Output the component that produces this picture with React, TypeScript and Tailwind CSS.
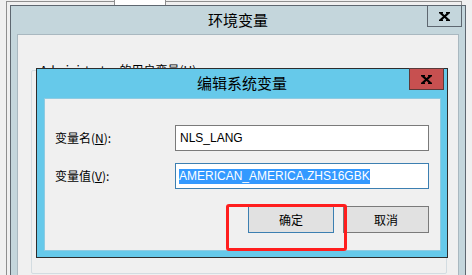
import React from "react";

const XGlyph = () => (
  <svg width="11" height="9" viewBox="0 0 11 9" className="block">
    <path d="M1.5 1 L9.5 8 M9.5 1 L1.5 8" stroke="#000" strokeWidth="2.3" />
    <path d="M0 0.8 H4 M7 0.8 H11 M0 8.2 H4 M7 8.2 H11" stroke="#000" strokeWidth="1.4" />
  </svg>
);

export default function App() {
  const cjk = { fontFamily: '"Noto Sans CJK SC", "Liberation Sans", sans-serif' };
  const latin = { fontFamily: '"Liberation Sans", "Noto Sans CJK SC", sans-serif' };
  return (
    <div className="relative w-[472px] h-[275px] overflow-hidden bg-[#f0f0f0]" style={cjk}>
      {/* background tab frame */}
      <div className="absolute left-[6px] top-[1px] w-[456px] h-[300px] border border-[#8f8f8f]" />
      <div className="absolute left-[114px] top-0 w-[52px] h-[5px] bg-white border-x border-[#8f8f8f]" />

      {/* outer window 环境变量 */}
      <div className="absolute left-[10px] top-[5px] w-[456px] h-[290px] border border-[#5e6770] bg-[#c4d6dc] flex flex-col">
        <div className="relative h-[28px] flex items-center justify-center text-[15px] text-black">
          环境变量
          <div className="absolute top-[-1px] right-[3px] w-[35px] h-[22px] border border-[#5e6770] flex items-center justify-center">
            <XGlyph />
          </div>
        </div>
        <div className="flex-1 ml-[6px] mr-[6px] border-x border-t border-[#a9b8c0] bg-[#f0f0f0] relative">
          <div className="pl-[22px] pt-[27px] text-[12px] text-black leading-[16px]">
            Administrator 的用户变量(<span className="underline">U</span>)
          </div>
          <div className="absolute left-[13px] top-[35px] w-[416px] h-[204px] border border-[#d3dce1] rounded-[2px]" />
        </div>
      </div>

      {/* inner dialog 编辑系统变量 */}
      <div className="absolute left-[36px] top-[68px] w-[412px] h-[190px] border border-[#2d2d2d] bg-[#66c9ea] flex flex-col">
        <div className="relative h-[29px] flex items-center justify-center text-[15px] text-black">
          编辑系统变量
          <div className="absolute top-[-1px] right-[3px] w-[35px] h-[22px] border border-[#5a3a3a] bg-[#c75050] flex items-center justify-center">
            <XGlyph />
          </div>
        </div>
        <div className="flex-1 ml-[7px] mr-[6px] mb-[6px] bg-[#f0f0f0] border border-[#8fcbe2] flex flex-col pt-[26px] pr-[11px]">
          <div className="flex items-center h-[26px]">
            <div className="w-[130px] pl-[10px] text-[12px] text-black">
              变量名(<span className="underline">N</span>):
            </div>
            <div className="w-[254px] h-[26px] border border-[#7a7a7a] bg-white flex items-center pl-[4px] text-[12px] text-black" style={latin}>
              NLS_LANG
            </div>
          </div>
          <div className="flex items-center h-[26px] mt-[12px]">
            <div className="w-[130px] pl-[10px] text-[12px] text-black">
              变量值(<span className="underline">V</span>):
            </div>
            <div className="w-[254px] h-[26px] border border-[#3c7fb1] bg-white flex items-center pl-[3px] text-[12px]" style={latin}>
              <span className="bg-[#3399ff] text-white leading-[15px]">AMERICAN_AMERICA.ZHS16GBK</span>
            </div>
          </div>
          <div className="flex justify-end gap-[9px] mt-[17px]">
            <div className="w-[86px] h-[27px] border border-[#3c7fb1] bg-[#e1e1e1] flex items-center justify-center text-[12px] text-black">
              确定
            </div>
            <div className="w-[86px] h-[27px] border border-[#7a7a7a] bg-[#e1e1e1] flex items-center justify-center text-[12px] text-black">
              取消
            </div>
          </div>
        </div>
      </div>

      {/* red annotation */}
      <div className="absolute left-[226px] top-[204px] w-[121px] h-[47px] border-[3px] border-[#ff1e1e] rounded-[3px]" />
    </div>
  );
}
